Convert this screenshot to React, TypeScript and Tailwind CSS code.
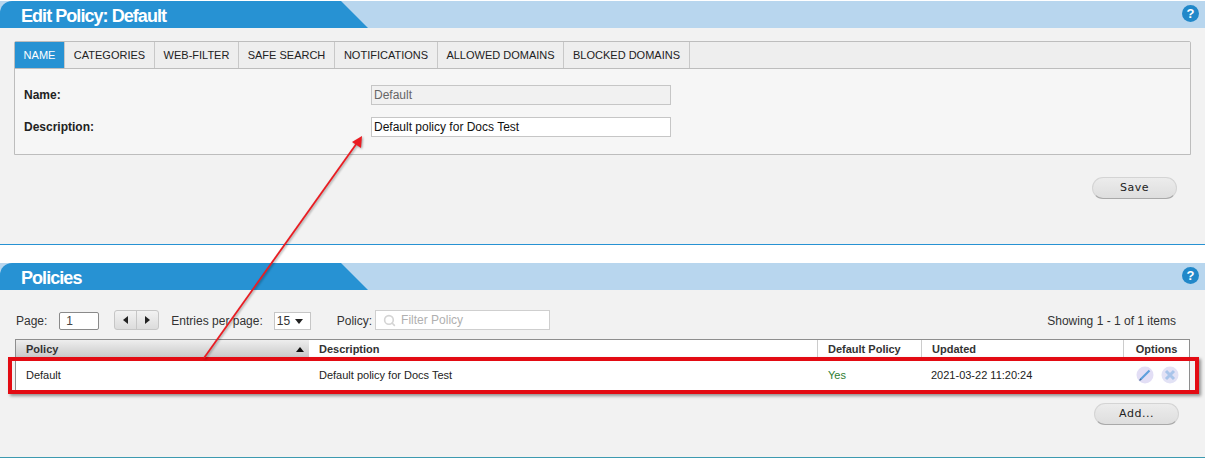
import { Search } from "lucide-react";

const tabs = [
  { label: "NAME", width: "w-[50px]" },
  { label: "CATEGORIES", width: "w-[90px]" },
  { label: "WEB-FILTER", width: "w-[84px]" },
  { label: "SAFE SEARCH", width: "w-[96px]" },
  { label: "NOTIFICATIONS", width: "w-[103px]" },
  { label: "ALLOWED DOMAINS", width: "w-[126px]" },
  { label: "BLOCKED DOMAINS", width: "w-[126px]" },
];

function SectionHeader({ title }: { title: string }) {
  return (
    <div className="flex h-[27px] items-center bg-[#b8d6ee] relative">
      <div className="h-full w-[368px] rounded-tl-[12px] overflow-hidden">
        <div className="h-full bg-[#2792d3] pl-[21px] pt-[2px] text-[18px] leading-[27px] font-bold tracking-[-0.95px] text-white [clip-path:polygon(0_0,341px_0,368px_100%,0_100%)]">
          {title}
        </div>
      </div>
      <div className="ml-auto mr-[6px] mb-[2px] flex h-[17px] w-[17px] items-center justify-center rounded-full bg-[#2188c9] text-[13px] font-bold text-white">
        ?
      </div>
    </div>
  );
}

function PillButton({ label, className }: { label: string; className: string }) {
  return (
    <button
      className={`h-[22px] rounded-full border border-[#d4d4d4] border-b-[#a9a9a9] bg-gradient-to-b from-[#ececec] to-[#dedede] text-[11px] tracking-[0.5px] text-[#222] font-['DejaVu_Sans',sans-serif] ${className}`}
    >
      {label}
    </button>
  );
}

export default function App() {
  return (
    <div className="relative h-[459px] w-[1205px] overflow-hidden bg-white pt-px font-['Liberation_Sans',Arial,sans-serif] text-[#222]">
      {/* Edit policy */}
      <div className="h-[244px] border-b border-[#2792d3] bg-[#f2f2f2]">
        <SectionHeader title="Edit Policy: Default" />
        <div className="mx-[14px] mt-[13px] h-[114px] rounded-t-[2px] border border-[#bdbdbd] bg-[#f6f6f6]">
          <div className="flex h-[27px] border-b border-[#bdbdbd] bg-[#eeeeee]">
            {tabs.map((tab, i) => (
              <div
                key={tab.label}
                className={`flex items-center justify-center border-r border-[#c8c8c8] text-[11px] ${tab.width} ${
                  i === 0 ? "bg-[#2792d3] text-white" : "text-[#222]"
                }`}
              >
                {tab.label}
              </div>
            ))}
          </div>
          <div className="flex h-[32px] items-center pl-[9px] mt-[10px]">
            <span className="w-[347px] text-[12px] font-bold">Name:</span>
            <div className="flex h-[20px] w-[300px] items-center border border-[#c6c6c6] bg-[#f1f1f1] pl-[2px] text-[12px] text-[#666]">
              Default
            </div>
          </div>
          <div className="flex h-[32px] items-center pl-[9px]">
            <span className="w-[347px] text-[12px] font-bold">Description:</span>
            <div className="flex h-[20px] w-[300px] items-center border border-[#c6c6c6] bg-white pl-[2px] text-[12px] text-[#111]">
              Default policy for Docs Test
            </div>
          </div>
        </div>
        <div className="mt-[22px] flex justify-end pr-[28px]">
          <PillButton label="Save" className="w-[85px] pt-px" />
        </div>
      </div>

      {/* Policies */}
      <div className="mt-[18px] h-[195px] border-b border-[#3d9ab0] bg-[#f2f2f2]">
        <SectionHeader title="Policies" />
        <div className="flex h-[49px] items-end pb-[9px] pl-[16px] pr-[29px] text-[12px] text-[#333]">
          <span>Page:</span>
          <div className="ml-[12px] flex h-[18px] w-[40px] items-center rounded-[2px] border border-[#8a8a8a] bg-white pl-[6px] text-[#444]">
            1
          </div>
          <div className="ml-[15px] flex h-[20px] w-[45px] rounded-[3px] border border-[#c6c6c6] bg-gradient-to-b from-[#f2f2f2] to-[#dcdcdc]">
            <div className="flex w-[22px] items-center justify-center border-r border-[#c6c6c6]">
              <span className="h-0 w-0 border-y-[4px] border-r-[5px] border-y-transparent border-r-[#222]" />
            </div>
            <div className="flex flex-1 items-center justify-center">
              <span className="h-0 w-0 border-y-[4px] border-l-[5px] border-y-transparent border-l-[#222]" />
            </div>
          </div>
          <span className="ml-[12px]">Entries per page:</span>
          <div className="ml-[11px] flex h-[18px] w-[37px] items-center border border-[#c6c6c6] bg-white pl-[2px] text-[#333]">
            15
            <span className="ml-[5px] h-0 w-0 border-x-[4px] border-t-[5px] border-x-transparent border-t-[#222]" />
          </div>
          <span className="ml-[26px]">Policy:</span>
          <div className="ml-[3px] flex h-[20px] w-[175px] items-center border border-[#cfcfcf] bg-white pl-[7px] text-[#b0b0b0]">
            <Search size={13} className="text-[#d4d4d4]" strokeWidth={3} />
            <span className="ml-[5px]">Filter Policy</span>
          </div>
          <span className="ml-auto">Showing 1 - 1 of 1 items</span>
        </div>

        <div className="mx-[15px] border border-[#8e8e8e] bg-white text-[11px]">
          <div className="flex h-[20px] items-center pb-px font-bold text-[#333]">
            <div className="flex h-[20px] w-[293px] items-center justify-between bg-gradient-to-b from-[#eeeeee] to-[#c4c4c4] pl-[10px] pr-[5px]">
              Policy
              <span className="h-0 w-0 border-x-[4px] border-b-[5px] border-x-transparent border-b-[#111]" />
            </div>
            <div className="flex h-full w-[508px] items-center pl-[10px]">Description</div>
            <div className="flex h-full w-[104px] items-center border-l border-[#cccccc] pl-[10px]">Default Policy</div>
            <div className="flex h-full w-[202px] items-center border-l border-[#cccccc] pl-[10px]">Updated</div>
            <div className="flex h-full flex-1 items-center justify-center border-l border-[#cccccc]">Options</div>
          </div>
          <div className="flex h-[32px] items-center pb-[2px] text-[#222]">
            <div className="w-[293px] pl-[10px]">Default</div>
            <div className="w-[508px] pl-[10px]">Default policy for Docs Test</div>
            <div className="w-[104px] pl-[11px] text-[#2e7d32]">Yes</div>
            <div className="w-[202px] pl-[10px]">2021-03-22 11:20:24</div>
            <div className="flex flex-1 items-center justify-center gap-[7px] pl-[2px]">
              <svg width="18" height="18" viewBox="0 0 18 18" fill="none">
                <circle cx="9" cy="9" r="8.5" fill="#e2def5" />
                <path d="M4.5 13.5 L13.5 4.5" stroke="#5d9fdc" strokeWidth="2.2" />
                <path d="M3.5 14.5 L5 13" stroke="#4a6f9c" strokeWidth="1.4" />
              </svg>
              <svg width="18" height="18" viewBox="0 0 18 18" fill="none">
                <circle cx="9" cy="9" r="8.5" fill="#e2e2f5" />
                <path d="M5 5 L13 13 M13 5 L5 13" stroke="#a9c5ea" strokeWidth="3" />
              </svg>
            </div>
          </div>
        </div>
        <div className="mt-[10px] flex justify-end pr-[26px]">
          <PillButton label="Add..." className="w-[85px]" />
        </div>
      </div>

      {/* Annotation: highlight box and arrow */}
      <div className="absolute left-[8px] top-[357px] h-[37px] w-[1191px] border-[4px] border-[#e30b13] shadow-[2px_2px_3px_rgba(0,0,0,0.4)]" />
      <svg className="absolute left-0 top-0 drop-shadow-[1px_1px_1px_rgba(0,0,0,0.35)]" width="1205" height="459" fill="none">
        <line x1="204" y1="358" x2="357" y2="143" stroke="#ea1c22" strokeWidth="1.8" />
        <polygon points="362,136 361,148 352,142" fill="#ea1c22" />
      </svg>
    </div>
  );
}
